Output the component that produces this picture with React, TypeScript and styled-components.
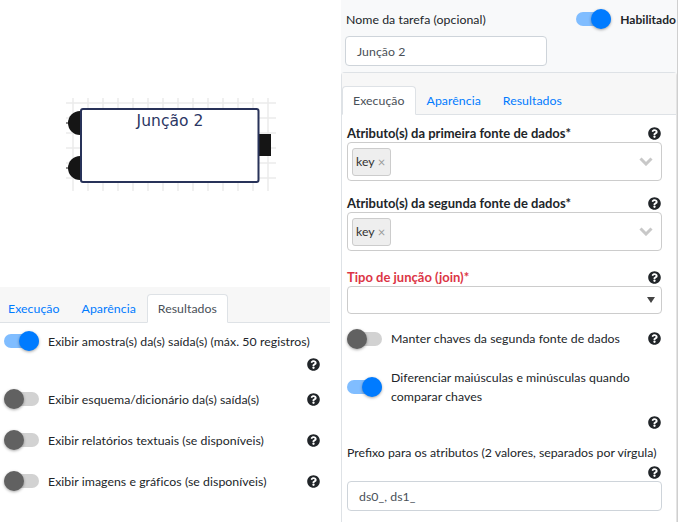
import styled, { createGlobalStyle } from 'styled-components';
import { FaQuestionCircle } from 'react-icons/fa';

const GlobalStyle = createGlobalStyle`
    html, body {
        margin: 0;
        padding: 0;
        background: #fff;
    }
    body {
        font-family: Lato, "Open Sans", "Liberation Sans", sans-serif;
        font-size: 12.3px;
        letter-spacing: 0.05px;
        color: #212529;
    }
`

const Page = styled.div`
    display: flex;
    width: 685px;
    height: 522px;
    overflow: hidden;
`

const LeftCol = styled.div`
    width: 341px;
    display: flex;
    flex-direction: column;
`

const Canvas = styled.div`
    height: 287px;
    flex-shrink: 0;
`

const TabBar = styled.div<{ $width?: number }>`
    display: flex;
    align-items: flex-end;
    height: 36px;
    width: ${({ $width }) => $width ? `${$width}px` : 'auto'};
    box-sizing: border-box;
    background: #f7f7f7;
    border-bottom: 1px solid #dee2e6;
`

const Tab = styled.div<{ $active?: boolean }>`
    height: 29px;
    box-sizing: border-box;
    padding: 0 10px;
    display: flex;
    align-items: center;
    margin-bottom: -1px;
    color: ${({ $active }) => $active ? '#495057' : '#007bff'};
    background: ${({ $active }) => $active ? '#fff' : 'transparent'};
    border: 1px solid ${({ $active }) => $active ? '#dee2e6' : 'transparent'};
    border-bottom-color: ${({ $active }) => $active ? '#fff' : 'transparent'};
    border-radius: 4px 4px 0 0;
    &:first-child {
        margin-left: -3px;
    }
`

const OptionList = styled.div`
    display: flex;
    flex-direction: column;
    padding: 8px 21px 0 4px;
`

const OptionRow = styled.div<{ $top?: number }>`
    display: flex;
    align-items: center;
    min-height: 20px;
    margin-top: ${({ $top }) => $top || 0}px;
`

const OptionText = styled.span`
    flex: 1;
    margin-left: 9px;
    line-height: 19px;
`

const HelpLine = styled.div<{ $top?: number }>`
    display: flex;
    justify-content: flex-end;
    height: 14px;
    align-items: center;
    margin-top: ${({ $top }) => $top || 0}px;
`

const SwitchTrack = styled.span<{ $on?: boolean }>`
    position: relative;
    display: inline-block;
    flex-shrink: 0;
    width: 35px;
    height: 14px;
    border-radius: 7px;
    background: ${({ $on }) => $on ? '#80bdff' : '#d2d2d2'};
`

const SwitchThumb = styled.span<{ $on?: boolean }>`
    position: absolute;
    top: -3px;
    left: ${({ $on }) => $on ? '15px' : '0'};
    width: 20px;
    height: 20px;
    border-radius: 50%;
    background: ${({ $on }) => $on ? '#007bff' : '#616161'};
    box-shadow: 0 1px 3px rgba(0, 0, 0, 0.35);
`

const RightCol = styled.div`
    width: 336px;
    border-right: 1px solid #cfcfcf;
    background: #f8f9fa;
    display: flex;
    flex-direction: column;
`

const TopSection = styled.div`
    padding: 9px 0 6px 4px;
`

const TopRow = styled.div`
    display: flex;
    align-items: center;
    height: 20px;
`

const TopLabel = styled.span`
    flex: 1;
    margin-left: 1px;
`

const Strong = styled.span`
    font-weight: 700;
    font-size: 12px;
    margin-left: 9px;
    margin-right: 1px;
`

const TextInput = styled.div<{ $width?: string }>`
    width: ${({ $width }) => $width || 'auto'};
    height: 30px;
    box-sizing: border-box;
    border: 1px solid #ced4da;
    border-radius: 4px;
    background: #fff;
    padding: 0 11px;
    display: flex;
    align-items: center;
    color: #495057;
`

const Card = styled.div`
    flex: 1;
    border: 1px solid #dee2e6;
    border-right: 1px solid #e4e4e4;
    border-bottom: none;
    border-radius: 4px 4px 0 0;
    background: #fff;
    display: flex;
    flex-direction: column;
`

const CardHeader = styled(TabBar)`
    height: 42px;
    padding-left: 3px;
`

const CardBody = styled.div`
    padding: 9px 14px 0 5px;
    display: flex;
    flex-direction: column;
`

const Field = styled.div<{ $bottom?: number }>`
    margin-bottom: ${({ $bottom }) => $bottom || 0}px;
`

const LabelRow = styled.div<{ $color?: string; $bold?: boolean }>`
    display: flex;
    align-items: center;
    justify-content: space-between;
    height: 18px;
    font-size: ${({ $bold }) => $bold ? '13px' : '12.3px'};
    letter-spacing: 0;
    font-weight: ${({ $bold }) => $bold ? 700 : 400};
    color: ${({ $color }) => $color || '#212529'};
    padding-right: 1px;
`

const MultiSelect = styled.div`
    height: 39px;
    box-sizing: border-box;
    border: 1px solid #ccc;
    border-radius: 4px;
    background: #fff;
    display: flex;
    align-items: center;
    padding: 0 8px 0 4px;
`

const Chip = styled.span`
    height: 28px;
    box-sizing: border-box;
    border: 1px solid #ccc;
    border-radius: 3px;
    background: #eee;
    display: flex;
    align-items: center;
    padding: 0 5px 0 3px;
    color: #333;
`

const ChipX = styled.span`
    color: #9a9a9a;
    margin-left: 3px;
    font-size: 13px;
`

const Spacer = styled.span`
    flex: 1;
`

const SingleSelect = styled.div`
    height: 28px;
    box-sizing: border-box;
    border: 1px solid #ccc;
    border-radius: 4px;
    background: #fff;
    display: flex;
    align-items: center;
    justify-content: flex-end;
    padding-right: 6px;
`

const FormSwitchRow = styled.div<{ $top?: number }>`
    display: flex;
    align-items: center;
    margin-top: ${({ $top }) => $top || 0}px;
    padding-right: 1px;
`

const FormSwitchText = styled.span`
    flex: 1;
    margin-left: 9px;
    line-height: 19px;
    padding-right: 20px;
`

const Help = () => <FaQuestionCircle size={13} color="#212529" />

const Chevron = () => (
    <svg width="14" height="9" viewBox="0 0 14 9">
        <path d="M1.5 1.5 L7 7 L12.5 1.5" fill="none" stroke="#c8c8c8" strokeWidth="3" />
    </svg>
)

const Switch = ({ on }: { on?: boolean }) => (
    <SwitchTrack $on={on}><SwitchThumb $on={on} /></SwitchTrack>
)

const NodeDrawing = () => {
    const vx = Array.from({ length: 14 }, (_, i) => 73 + i * 15)
    const hy = Array.from({ length: 6 }, (_, i) => 103 + i * 15)
    return (
        <svg width="341" height="287">
            {vx.map(x => <line key={'v' + x} x1={x} y1={98} x2={x} y2={191} stroke="#ebebeb" strokeWidth="1.5" />)}
            {hy.map(y => <line key={'h' + y} x1={66} y1={y} x2={276} y2={y} stroke="#ebebeb" strokeWidth="1.5" />)}
            <path d="M80 111 A12 12 0 0 0 80 135 Z" fill="#151515" />
            <path d="M80 156 A12 12 0 0 0 80 180 Z" fill="#151515" />
            <line x1="66" y1="123" x2="69" y2="123" stroke="#151515" />
            <line x1="66" y1="168" x2="69" y2="168" stroke="#151515" />
            <rect x="259" y="134" width="12" height="22" fill="#151515" />
            <rect x="81" y="109" width="177.5" height="73" rx="2" fill="#fff" stroke="#283259" strokeWidth="2" />
            <text x="170" y="126" textAnchor="middle" fontSize="15.5" fill="#2b3664"
                fontFamily='"DejaVu Sans", "Liberation Sans", sans-serif'>Junção 2</text>
        </svg>
    )
}

export default function App() {
    const results = [
        'Exibir esquema/dicionário da(s) saída(s)',
        'Exibir relatórios textuais (se disponíveis)',
        'Exibir imagens e gráficos (se disponíveis)',
    ]

    return (
        <>
            <GlobalStyle />
            <Page>
                <LeftCol>
                    <Canvas><NodeDrawing /></Canvas>
                    <TabBar $width={330}>
                        <Tab>Execução</Tab>
                        <Tab>Aparência</Tab>
                        <Tab $active>Resultados</Tab>
                    </TabBar>
                    <OptionList>
                        <OptionRow>
                            <Switch on />
                            <OptionText>Exibir amostra(s) da(s) saída(s) (máx. 50 registros)</OptionText>
                        </OptionRow>
                        <HelpLine $top={6}><Help /></HelpLine>
                        {results.map((text, index) => (
                            <OptionRow key={index} $top={index === 0 ? 18 : 21}>
                                <Switch />
                                <OptionText>{text}</OptionText>
                                <Help />
                            </OptionRow>
                        ))}
                    </OptionList>
                </LeftCol>

                <RightCol>
                    <TopSection>
                        <TopRow>
                            <TopLabel>Nome da tarefa (opcional)</TopLabel>
                            <Switch on />
                            <Strong>Habilitado</Strong>
                        </TopRow>
                        <TextInput $width="202px" style={{ marginTop: 7 }}>Junção 2</TextInput>
                    </TopSection>

                    <Card>
                        <CardHeader>
                            <Tab $active>Execução</Tab>
                            <Tab>Aparência</Tab>
                            <Tab>Resultados</Tab>
                        </CardHeader>
                        <CardBody>
                            <Field $bottom={13}>
                                <LabelRow $bold>Atributo(s) da primeira fonte de dados*<Help /></LabelRow>
                                <MultiSelect>
                                    <Chip>key<ChipX>×</ChipX></Chip>
                                    <Spacer />
                                    <Chevron />
                                </MultiSelect>
                            </Field>
                            <Field $bottom={17}>
                                <LabelRow $bold>Atributo(s) da segunda fonte de dados*<Help /></LabelRow>
                                <MultiSelect>
                                    <Chip>key<ChipX>×</ChipX></Chip>
                                    <Spacer />
                                    <Chevron />
                                </MultiSelect>
                            </Field>
                            <Field>
                                <LabelRow $bold $color="#dc3545">Tipo de junção (join)*<Help /></LabelRow>
                                <SingleSelect>
                                    <svg width="8" height="6"><path d="M0 0 L8 0 L4 6 Z" fill="#444" /></svg>
                                </SingleSelect>
                            </Field>
                            <FormSwitchRow $top={15}>
                                <Switch />
                                <FormSwitchText>Manter chaves da segunda fonte de dados</FormSwitchText>
                                <Help />
                            </FormSwitchRow>
                            <FormSwitchRow $top={20}>
                                <Switch on />
                                <FormSwitchText>Diferenciar maiúsculas e minúsculas quando comparar chaves</FormSwitchText>
                            </FormSwitchRow>
                            <HelpLine $top={9} style={{ paddingRight: 1 }}><Help /></HelpLine>
                            <LabelRow style={{ marginTop: 14 }}>Prefixo para os atributos (2 valores, separados por vírgula)</LabelRow>
                            <HelpLine $top={4} style={{ paddingRight: 1 }}><Help /></HelpLine>
                            <TextInput style={{ marginTop: 2 }}>ds0_, ds1_</TextInput>
                        </CardBody>
                    </Card>
                </RightCol>
            </Page>
        </>
    )
}
